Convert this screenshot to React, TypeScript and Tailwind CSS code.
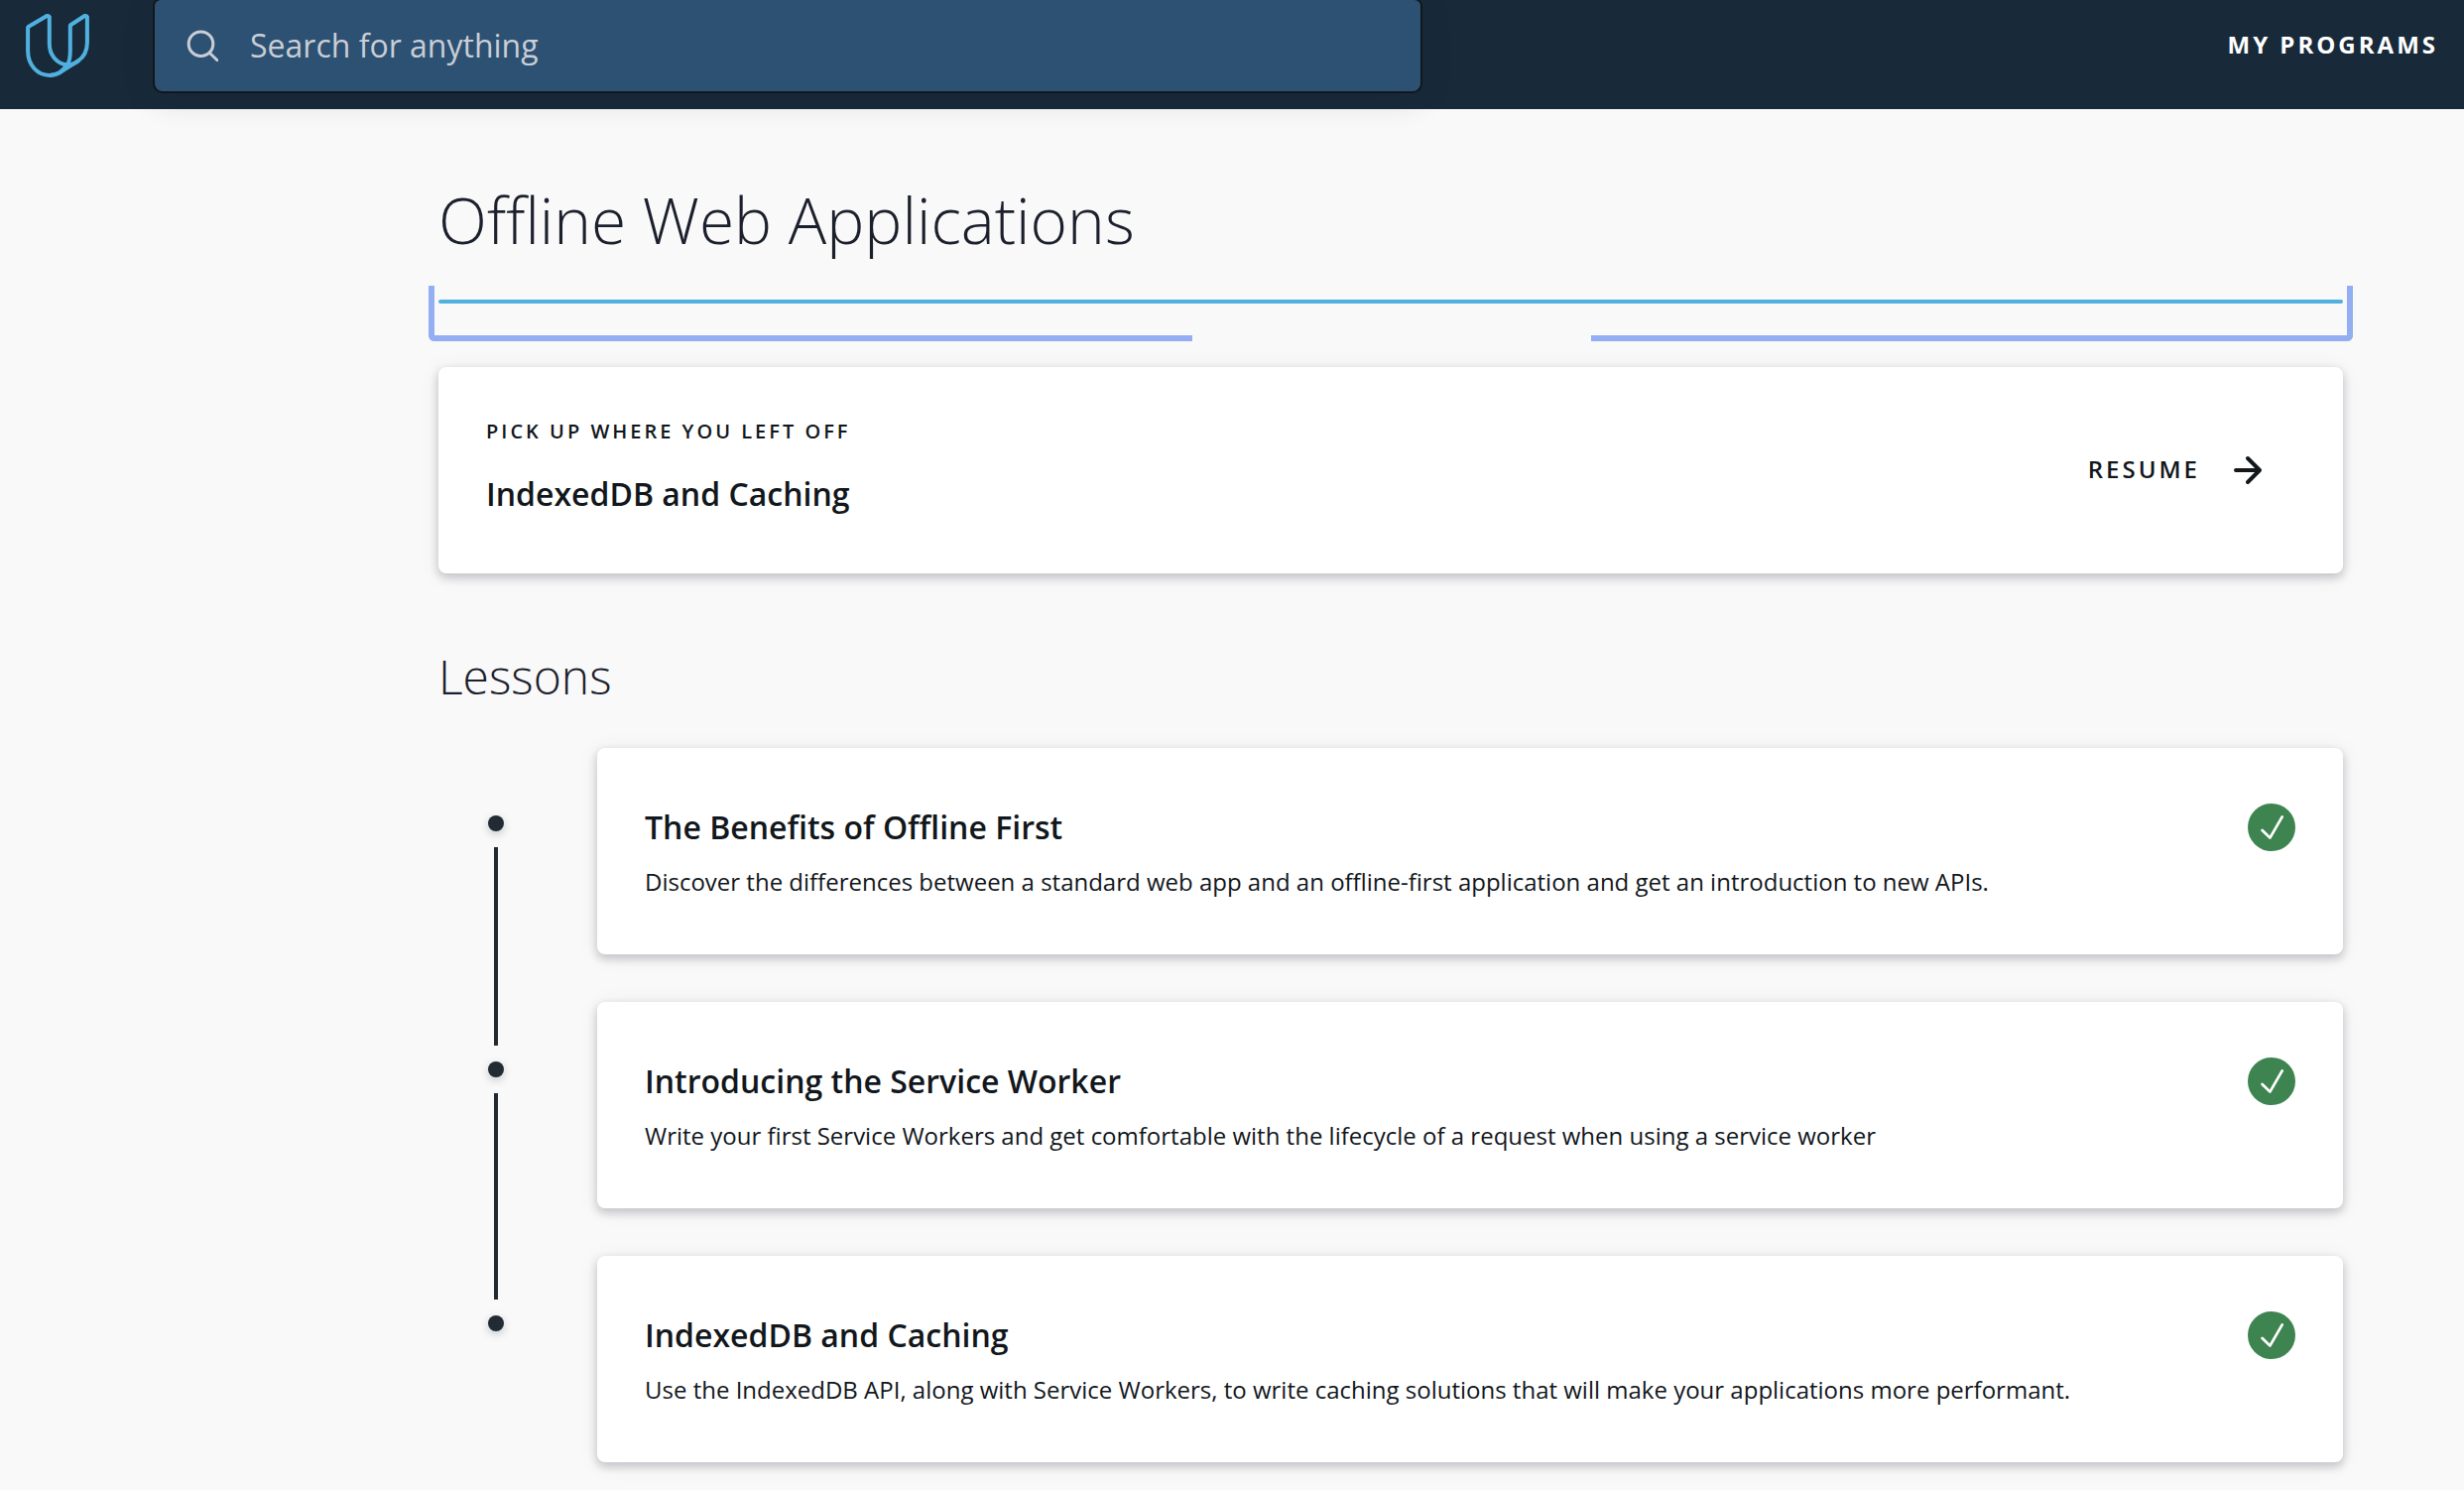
import React from "react";

const lessons = [
  {
    title: "The Benefits of Offline First",
    text: "Discover the differences between a standard web app and an offline-first application and get an introduction to new APIs.",
  },
  {
    title: "Introducing the Service Worker",
    text: "Write your first Service Workers and get comfortable with the lifecycle of a request when using a service worker",
  },
  {
    title: "IndexedDB and Caching",
    text: "Use the IndexedDB API, along with Service Workers, to write caching solutions that will make your applications more performant.",
  },
];

const card =
  "rounded-lg bg-white shadow-[0_4px_8px_1px_rgba(20,26,40,0.20),0_2px_24px_0_rgba(20,26,50,0.06)]";

function Logo() {
  return (
    <svg className="ml-[26px] mt-3.5 h-16 w-16 shrink-0" viewBox="0 0 64 64" fill="none" stroke="#50b1e1" strokeWidth="4" strokeLinejoin="bevel">
      <path d="M41.5 51.3 C31 50 23.8 41.5 23.8 30 V2.6 L21.6 1.8 L2.1 13.3 V37 C2.1 51.8 11.8 61.9 24 61.9 C28 61.9 31 61 34 59.2 L52.5 47.6 C58.5 43.6 61.9 38.5 61.9 29 V2.6 L59.7 1.8 L44.8 11.5 V37 C44.8 43.5 44.2 47.8 42 51" />
      <path d="M24 61.9 C31.5 61.9 37.5 58 41.3 51.2 C46 51.7 50 50 53.5 46.8" />
    </svg>
  );
}

function CheckBadge() {
  return (
    <svg className="h-12 w-12 shrink-0" viewBox="0 0 48 48" fill="none">
      <circle cx="24" cy="24" r="24" fill="#3e8450" />
      <path d="M14.6 27 L22.4 34.6 L34.7 13.4" stroke="#fff" strokeWidth="2.7" strokeLinecap="round" strokeLinejoin="round" />
    </svg>
  );
}

function Dot() {
  return <div className="h-4 w-4 shrink-0 rounded-full bg-[#222b34] shadow-[0_3px_8px_rgba(20,26,40,0.22)]" />;
}

export default function App() {
  return (
    <div className="h-[1502px] w-[2484px] overflow-hidden bg-[#f9f9f9] font-['Open_Sans',sans-serif] text-[#12171c]">
      <header className="flex h-[110px] items-start bg-[#182a3a]">
        <Logo />
        <div className="ml-[66px] flex h-[92px] w-[1276px] items-center rounded-b-lg rounded-t-md bg-[#2d5173] pl-8 shadow-[0_0_0_2px_#12171c,0_8px_32px_rgba(18,23,28,0.16)]">
          <svg className="h-8 w-8" viewBox="0 0 32 32" fill="none" stroke="#c9ced6" strokeWidth="3" strokeLinecap="round">
            <circle cx="14.5" cy="14.2" r="12.3" />
            <path d="M23.5 23.5 L31 30.8" />
          </svg>
          <span className="ml-8 text-[32px] leading-[44px] text-[#c9ced6]">Search for anything</span>
        </div>
        <nav className="ml-auto mr-[26px] mt-7 text-2xl font-bold leading-[34px] tracking-[3px] text-white">MY PROGRAMS</nav>
      </header>

      <main className="ml-[442px] w-[1920px] pt-[74px]">
        <h1 className="text-[64px] font-light leading-[76px] text-[#1b202c]">Offline Web Applications</h1>
        <div className="-mx-2.5 mt-7 flex h-14 justify-between">
          <div className="h-full w-[770px] rounded-bl-md border-b-6 border-l-6 border-[#93aef2]" />
          <div className="h-full w-[768px] rounded-br-md border-b-6 border-r-6 border-[#93aef2]" />
        </div>
        <div className="relative -mt-[42px] h-1 rounded-full bg-[#50b1de]" />

        <section className={card + " mt-16 flex h-52 items-center justify-between pl-12 pr-20"}>
          <div className="pb-[5px]">
            <p className="text-xl font-semibold leading-7 tracking-[3px]">PICK UP WHERE YOU LEFT OFF</p>
            <h2 className="mt-[25px] text-[32px] font-semibold leading-[48px]">IndexedDB and Caching</h2>
          </div>
          <div className="flex items-center">
            <span className="pb-[3px] text-2xl font-semibold leading-8 tracking-[3px]">RESUME</span>
            <svg className="ml-8 h-8 w-8" viewBox="0 0 32 32" fill="none" stroke="#12171c" strokeWidth="4" strokeLinecap="round" strokeLinejoin="round">
              <path d="M4 16 H28 M16 4 L28 16 L16 28" />
            </svg>
          </div>
        </section>

        <h2 className="mt-[74px] text-[48px] font-light leading-[60px] text-[#1b202c]">Lessons</h2>

        <div className="mt-[42px] flex">
          <div className="ml-[50px] mr-[94px] flex w-4 flex-col items-center gap-4 pt-[68px]">
            <Dot />
            <div className="h-[200px] w-1 bg-[#222b34]" />
            <Dot />
            <div className="h-52 w-1 bg-[#222b34]" />
            <Dot />
          </div>
          <div className="flex flex-1 flex-col gap-12">
            {lessons.map((l) => (
              <article key={l.title} className={card + " flex h-52 items-start justify-between px-12 pt-14"}>
                <div>
                  <h3 className="text-[32px] font-semibold leading-[48px]">{l.title}</h3>
                  <p className="mt-[13px] text-2xl leading-9">{l.text}</p>
                </div>
                <CheckBadge />
              </article>
            ))}
          </div>
        </div>
      </main>
    </div>
  );
}
